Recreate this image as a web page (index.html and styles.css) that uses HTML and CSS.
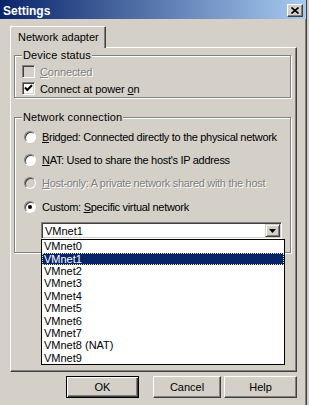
FILE: index.html
```html
<!DOCTYPE html>
<html>
<head>
<meta charset="utf-8">
<link rel="stylesheet" href="styles.css">
</head>
<body>
<div class="window">
  <div class="titlebar">
    <span class="title">Settings</span>
    <span class="close"><svg width="8" height="7" viewBox="0 0 8 7"><path d="M0.5 0.5 L7.5 6.5 M7.5 0.5 L0.5 6.5" stroke="#000" stroke-width="1.6" fill="none"/></svg></span>
  </div>
  <div class="tabs"><div class="tab">Network adapter</div></div>
  <div class="panel">
    <fieldset class="group g1">
      <legend>Device status</legend>
      <div class="crow disabled"><span class="check"></span><span class="lbl"><u>C</u>onnected</span></div>
      <div class="crow"><span class="check on"><svg width="9" height="9" viewBox="0 0 9 9"><path d="M1 3.5 L3.3 6 L8 1.3" stroke="#000" stroke-width="2" fill="none"/></svg></span><span class="lbl">Connect at power <u>o</u>n</span></div>
    </fieldset>
    <fieldset class="group g2">
      <legend>Network connection</legend>
      <div class="rrow"><span class="radio"></span><span class="lbl"><u>B</u>ridged: Connected directly to the physical network</span></div>
      <div class="rrow"><span class="radio"></span><span class="lbl"><u>N</u>AT: Used to share the host's IP address</span></div>
      <div class="rrow disabled"><span class="radio"></span><span class="lbl"><u>H</u>ost-only: A private network shared with the host</span></div>
      <div class="rrow"><span class="radio sel"></span><span class="lbl">Custom: <u>S</u>pecific virtual network</span></div>
      <div class="combo">
        <span class="value">VMnet1</span>
        <span class="arrow"><svg width="7" height="4" viewBox="0 0 7 4"><path d="M0 0 H7 L3.5 4 Z" fill="#000"/></svg></span>
        <div class="dropdown">
          <div class="item">VMnet0</div>
          <div class="item hl">VMnet1</div>
          <div class="item">VMnet2</div>
          <div class="item">VMnet3</div>
          <div class="item">VMnet4</div>
          <div class="item">VMnet5</div>
          <div class="item">VMnet6</div>
          <div class="item">VMnet7</div>
          <div class="item">VMnet8 (NAT)</div>
          <div class="item">VMnet9</div>
        </div>
      </div>
    </fieldset>
  </div>
  <div class="buttons">
    <span class="btn ok">OK</span>
    <span class="btn cancel">Cancel</span>
    <span class="btn help">Help</span>
  </div>
</div>
</body>
</html>
```
FILE: styles.css
```css
html, body {
  margin: 0;
  background: #d4d0c8;
}
body {
  font: 11px "Liberation Sans", Arial, sans-serif;
  color: #000;
}
.window {
  width: 307px;
  height: 405px;
  box-sizing: border-box;
  border-right: 1px solid #404040;
  box-shadow: inset -1px 0 #808080;
  overflow: hidden;
}
.titlebar {
  height: 19px;
  display: flex;
  align-items: center;
  justify-content: space-between;
  padding: 0 3px 0 3px;
  background: linear-gradient(to right, #0a246a, #a6caf0);
}
.title {
  color: #fff;
  font-weight: bold;
  font-size: 12px;
  padding-top: 3px;
}
.close {
  width: 16px;
  height: 13px;
  box-sizing: border-box;
  margin-top: 2px;
  background: #d4d0c8;
  border: 1px solid;
  border-color: #fff #404040 #404040 #fff;
  box-shadow: inset -1px -1px #808080;
  display: flex;
  align-items: center;
  justify-content: center;
}
.tabs {
  display: flex;
  padding: 7px 0 0 10px;
}
.tab {
  position: relative;
  z-index: 1;
  height: 22px;
  box-sizing: border-box;
  margin-bottom: -1px;
  padding: 0 6px 2px 7px;
  display: flex;
  align-items: center;
  background: #d4d0c8;
  border: 1px solid;
  border-bottom: none;
  border-color: #fff #404040 transparent #fff;
  box-shadow: inset -1px 0 #808080;
}
.panel {
  margin-left: 10px;
  width: 287px;
  height: 325px;
  box-sizing: border-box;
  border: 1px solid;
  border-color: #fff #404040 #404040 #fff;
  box-shadow: inset -1px -1px #808080;
  padding: 1px 4px 0 3px;
}
.group {
  margin: 0;
  min-width: 0;
  border: 1px solid #808080;
  box-shadow: 1px 1px 0 #fff, inset 1px 1px 0 #fff;
  padding: 1px 0 0 7px;
}
.group legend {
  padding: 0 1px;
  line-height: 13px;
  background: #d4d0c8;
  letter-spacing: 0.15px;
}
.g1 { width: 277px; box-sizing: border-box; }
.g2 {
  width: 277px;
  box-sizing: border-box;
  margin-top: 13px;
  padding-bottom: 13px;
}
.lbl { white-space: nowrap; }
.crow {
  height: 17px;
  display: flex;
  align-items: center;
}
.crow .lbl { letter-spacing: -0.1px; }
.check {
  width: 13px;
  height: 13px;
  box-sizing: border-box;
  margin-right: 5px;
  background: #fff;
  border: 1px solid;
  border-color: #808080 #fff #fff #808080;
  box-shadow: inset 1px 1px 0 #404040, inset -1px -1px 0 #d4d0c8;
  display: flex;
  align-items: center;
  justify-content: center;
}
.disabled .check { background: #d4d0c8; }
.disabled .lbl {
  color: #808080;
  text-shadow: 1px 1px 0 #fff;
}
.rrow {
  height: 23.3px;
  display: flex;
  align-items: center;
  padding-left: 2px;
}
.rrow .lbl { letter-spacing: -0.3px; }
.radio {
  width: 12px;
  height: 12px;
  box-sizing: border-box;
  border-radius: 50%;
  margin-right: 6px;
  background: #fff;
  border: 1px solid;
  border-color: #808080 #fff #fff #808080;
  box-shadow: inset 1px 1px 0 #404040;
  display: flex;
  align-items: center;
  justify-content: center;
}
.disabled .radio { background: #d4d0c8; }
.radio.sel::after {
  content: "";
  width: 4px;
  height: 4px;
  border-radius: 50%;
  background: #000;
}
u { text-underline-offset: 1px; }
.combo {
  position: relative;
  margin: 4px 0 0 19px;
  width: 241px;
  height: 17px;
  box-sizing: border-box;
  background: #fff;
  border: 1px solid;
  border-color: #808080 #fff #fff #808080;
  box-shadow: inset 1px 1px 0 #404040, inset -1px -1px 0 #d4d0c8;
  display: flex;
  align-items: center;
  justify-content: space-between;
  padding: 0 1px 0 3px;
}
.arrow {
  width: 15px;
  height: 13px;
  box-sizing: border-box;
  background: #d4d0c8;
  border: 1px solid;
  border-color: #d4d0c8 #404040 #404040 #d4d0c8;
  box-shadow: inset 1px 1px 0 #fff, inset -1px -1px 0 #808080;
  display: flex;
  align-items: center;
  justify-content: center;
}
.dropdown {
  position: absolute;
  top: calc(100% + 1px);
  left: -1px;
  width: 244px;
  box-sizing: border-box;
  background: #fff;
  border: 1px solid #000;
  z-index: 2;
}
.item {
  height: 12.4px;
  line-height: 12.4px;
  padding-left: 2px;
}
.item.hl {
  background: #0a246a;
  color: #fff;
  outline: 1px dotted #e8e0a0;
  outline-offset: -1px;
}
.buttons {
  display: flex;
  padding: 4px 0 0 66px;
}
.btn {
  height: 22px;
  box-sizing: border-box;
  display: flex;
  align-items: center;
  justify-content: center;
  background: #d4d0c8;
  border: 1px solid;
  border-color: #fff #404040 #404040 #fff;
  box-shadow: inset -1px -1px 0 #808080;
}
.ok {
  width: 73px;
  border-color: #000;
  box-shadow: inset 1px 1px 0 #fff, inset -1px -1px 0 #404040, inset -2px -2px 0 #808080;
}
.cancel { width: 68px; margin-left: 14px; }
.help { width: 73px; margin-left: 3px; }
```
